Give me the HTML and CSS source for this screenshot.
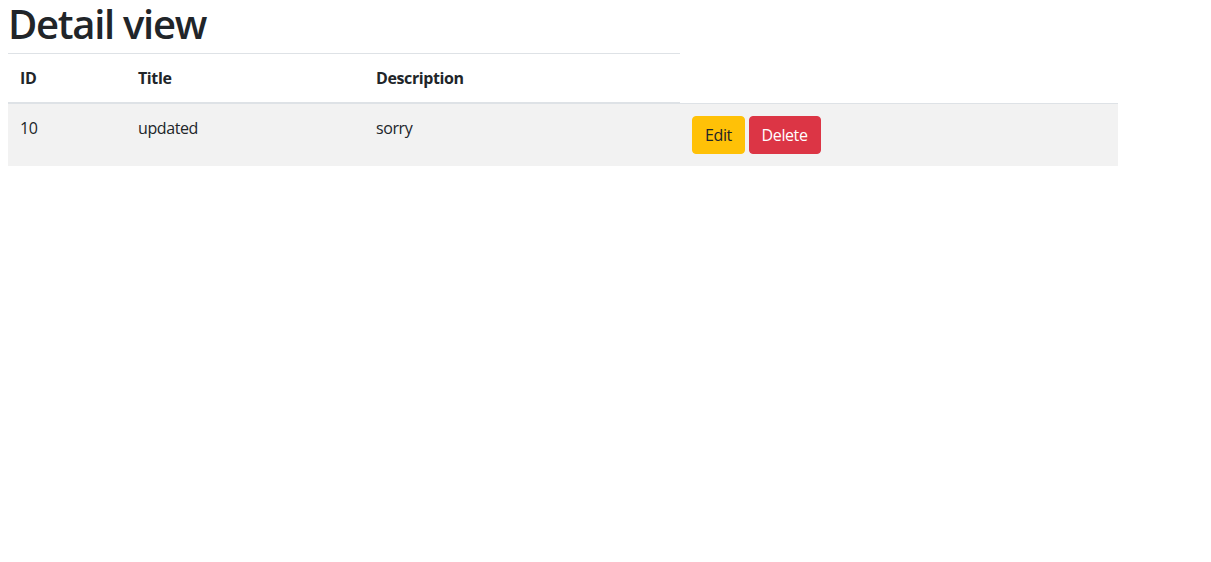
FILE: index.html
```html
<!DOCTYPE html>
<html lang="en">
<head>
<meta charset="utf-8">
<title>Detail view</title>
<link rel="stylesheet" href="styles.css">
</head>
<body>
<div class="page">
  <h1 class="title">Detail view</h1>
  <table class="table">
    <thead>
      <tr>
        <th class="col-id">ID</th>
        <th class="col-title">Title</th>
        <th class="col-desc">Description</th>
      </tr>
    </thead>
    <tbody>
      <tr class="row-striped">
        <td>10</td>
        <td>updated</td>
        <td>sorry</td>
        <td class="col-actions"><button class="btn btn-warning">Edit</button> <button class="btn btn-danger">Delete</button></td>
      </tr>
    </tbody>
  </table>
</div>
</body>
</html>
```
FILE: styles.css
```css
html, body {
  margin: 0;
  padding: 0;
  background: #fff;
}
body {
  font-family: "Open Sans", "Noto Sans", sans-serif;
  font-size: 16px;
  line-height: 1.5;
  color: #212529;
}
.page {
  padding: 0 8px;
}
.title {
  font-size: 40px;
  font-weight: 600;
  line-height: 48px;
  margin: 0 0 5px;
  letter-spacing: -1.3px;
}
.table {
  width: 1110px;
  border-collapse: collapse;
  border-spacing: 0;
  letter-spacing: -0.4px;
}
.table th,
.table td {
  padding: 12px;
  text-align: left;
  vertical-align: top;
}
.table th {
  font-weight: 700;
  border-top: 1px solid #dee2e6;
  border-bottom: 2px solid #dee2e6;
}
.table td {
  border-top: 1px solid #dee2e6;
}
.col-id { width: 94px; }
.col-title { width: 214px; }
.col-desc { width: 292px; }
.row-striped {
  background: #f2f2f2;
}
.btn {
  display: inline-block;
  font-family: inherit;
  font-size: 16px;
  line-height: 24px;
  letter-spacing: -0.4px;
  padding: 6px 12px;
  border: 1px solid transparent;
  border-radius: 4px;
  margin: 0;
  cursor: pointer;
}
.btn-warning {
  background: #ffc107;
  border-color: #ffc107;
  color: #212529;
}
.btn-danger {
  background: #dc3545;
  border-color: #dc3545;
  color: #fff;
}
```
